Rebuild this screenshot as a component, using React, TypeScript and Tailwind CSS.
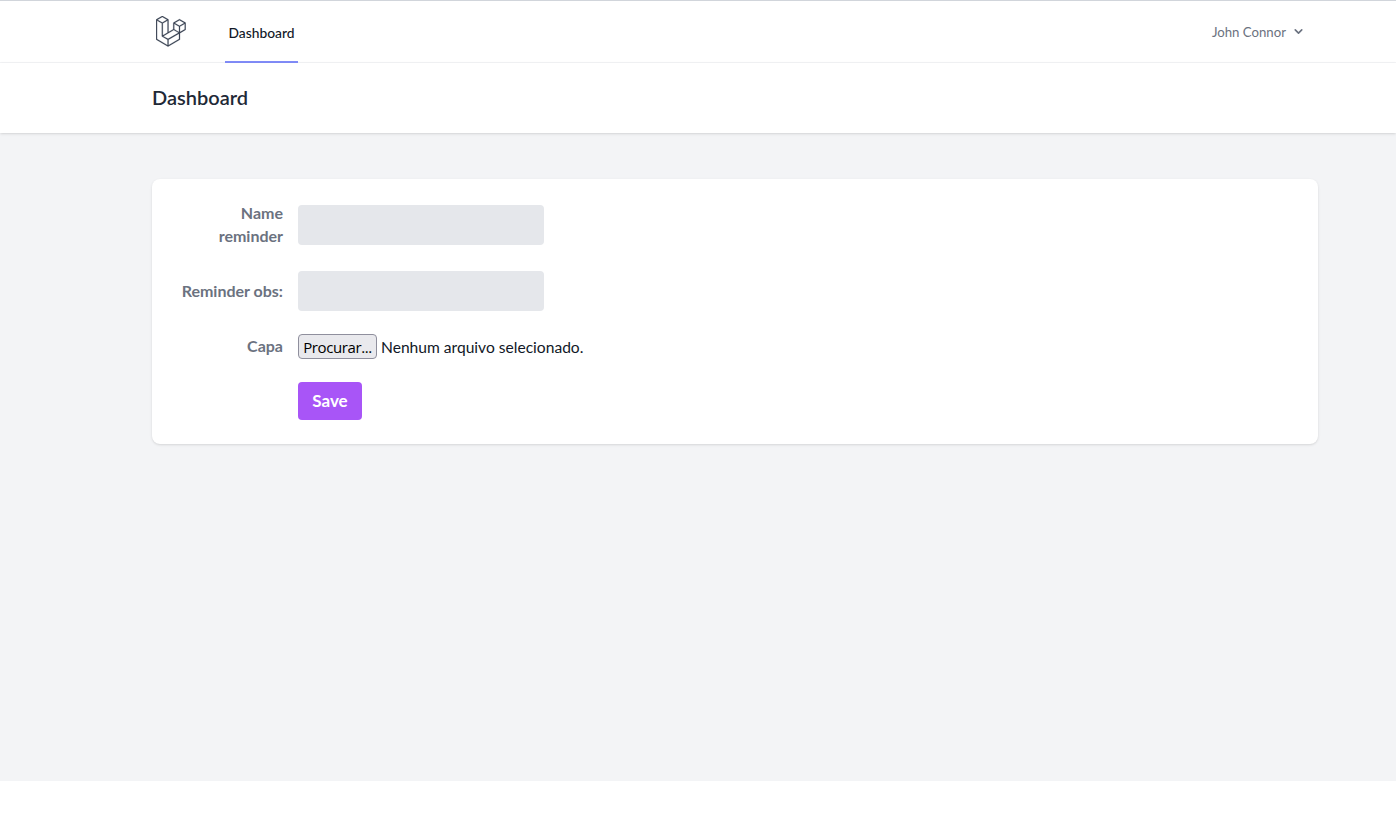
import { ChevronDown } from 'lucide-react';

const logoPath =
  'M49.626 11.564a.809.809 0 0 1 .028.209v10.972a.8.8 0 0 1-.402.694l-9.209 5.302V39.25c0 .286-.152.55-.4.694L20.42 51.01c-.044.025-.092.041-.14.058-.018.006-.035.017-.054.022a.805.805 0 0 1-.41 0c-.022-.006-.042-.018-.063-.026-.044-.016-.09-.03-.132-.054L.402 39.944A.801.801 0 0 1 0 39.25V6.334c0-.072.01-.142.028-.21.006-.023.02-.044.028-.067.015-.042.029-.085.051-.124.015-.026.037-.047.055-.071.023-.032.044-.065.071-.093.023-.023.053-.04.079-.06.029-.024.055-.05.088-.069h.001l9.61-5.533a.802.802 0 0 1 .8 0l9.61 5.533h.002c.032.02.059.045.088.068.026.02.055.038.078.06.028.029.048.062.072.094.017.024.04.045.054.071.023.04.036.082.052.124.008.023.022.044.028.068a.809.809 0 0 1 .028.209v20.559l8.008-4.611v-10.51c0-.07.01-.141.028-.208.007-.024.02-.045.028-.068.016-.042.03-.085.052-.124.015-.026.037-.047.054-.071.024-.032.044-.065.072-.093.023-.023.052-.04.078-.06.03-.024.056-.05.088-.069h.001l9.611-5.533a.801.801 0 0 1 .8 0l9.61 5.533c.034.02.06.045.09.068.025.02.054.038.077.06.028.029.048.062.072.094.018.024.04.045.054.071.023.039.036.082.052.124.009.023.022.044.028.068zm-1.574 10.718v-9.124l-3.363 1.936-4.646 2.675v9.124l8.01-4.611zm-9.61 16.505v-9.13l-4.57 2.61-13.05 7.448v9.216l17.62-10.144zM1.602 7.719v31.068L19.22 48.93v-9.214l-9.204-5.209-.003-.002-.004-.002c-.031-.018-.057-.044-.086-.066-.025-.02-.054-.036-.076-.058l-.002-.003c-.026-.025-.044-.056-.066-.084-.02-.027-.044-.05-.06-.078l-.001-.003c-.018-.03-.029-.066-.042-.1-.013-.03-.03-.058-.038-.09v-.001c-.01-.038-.012-.078-.016-.117-.004-.03-.012-.06-.012-.09v-.002-21.481L4.965 9.654 1.602 7.72zm8.81-5.994L2.405 6.334l8.005 4.609 8.006-4.61-8.006-4.608zm4.164 28.764l4.645-2.674V7.719l-3.363 1.936-4.646 2.675v20.096l3.364-1.937zM39.243 7.164l-8.006 4.609 8.006 4.609 8.005-4.61-8.005-4.608zm-.801 10.605l-4.646-2.675-3.363-1.936v9.124l4.645 2.674 3.364 1.937v-9.124zM20.02 38.33l11.743-6.704 5.87-3.35-8-4.606-9.211 5.303-8.395 4.833 7.993 4.524z';

const labelClass = 'w-[131px] pl-[24px] text-right font-bold text-[16px] leading-[23px] text-[#6b7280]';
const inputClass = 'w-[246px] h-[40px] rounded bg-[#e5e7eb]';

export default function App() {
  return (
    <div className="min-h-[838px] bg-white font-['Lato','Noto_Sans',sans-serif]">
      {/* Nav */}
      <nav className="border-t border-t-[#d1d5db] border-b border-b-[#f3f4f6] bg-white">
        <div className="flex h-[61px] items-stretch justify-between pl-[156px] pr-[91px]">
          <div className="flex items-stretch">
            <div className="flex items-center pb-[1px]">
              <svg
                viewBox="0 0 50 52"
                className="h-[31px] w-[30px] text-[#374151]"
                fill="currentColor"
                stroke="currentColor"
                strokeWidth="0.4"
              >
                <path d={logoPath} />
              </svg>
            </div>
            <a className="-mb-px ml-[39px] flex w-[73px] items-center justify-center border-b-2 border-[#818cf8] pt-[5px] text-[13.8px] font-medium text-[#111827]">
              Dashboard
            </a>
          </div>
          <button className="flex items-center gap-[6px] text-[13.2px] text-[#6b7280]">
            <span className="pt-[2px]">John Connor</span>
            <ChevronDown size={13} strokeWidth={3} />
          </button>
        </div>
      </nav>

      {/* Header */}
      <header className="relative flex h-[70px] items-center bg-white pb-[3px] pl-[152px] shadow">
        <h2 className="text-[20px] font-semibold text-[#1f2937]">Dashboard</h2>
      </header>

      {/* Main */}
      <main className="h-[648px] bg-[#f3f4f6] pl-[152px] pr-[78px] pt-[46px]">
        <form className="flex h-[265px] flex-col rounded-lg bg-white pt-[26px] shadow-sm">
          <div className="flex items-start gap-[15px]">
            <label className={`${labelClass} -mt-[4px] -mb-[2px]`}>Name reminder</label>
            <div className={inputClass} />
          </div>
          <div className="mt-[26px] flex items-center gap-[15px]">
            <label className={`${labelClass} pb-[2px]`}>Reminder obs:</label>
            <div className={inputClass} />
          </div>
          <div className="mt-[23px] flex items-center gap-[15px]">
            <label className={`${labelClass} pb-[2px]`}>Capa</label>
            <div className="flex items-center gap-[4px]">
              <button
                type="button"
                className="h-[25px] w-[79px] rounded-[4px] border border-[#8f8f9d] bg-[#e9e9ed] font-['Open_Sans',sans-serif] text-[15px] leading-[22px] tracking-[-0.4px] text-black"
              >
                Procurar...
              </button>
              <span className="pt-[2px] text-[15.6px] text-[#111827]">Nenhum arquivo selecionado.</span>
            </div>
          </div>
          <div className="mt-[23px] pl-[146px]">
            <button
              type="button"
              className="h-[38px] w-[64px] rounded bg-[#a855f7] pb-[2px] text-[17px] font-bold text-white"
            >
              Save
            </button>
          </div>
        </form>
      </main>
    </div>
  );
}
